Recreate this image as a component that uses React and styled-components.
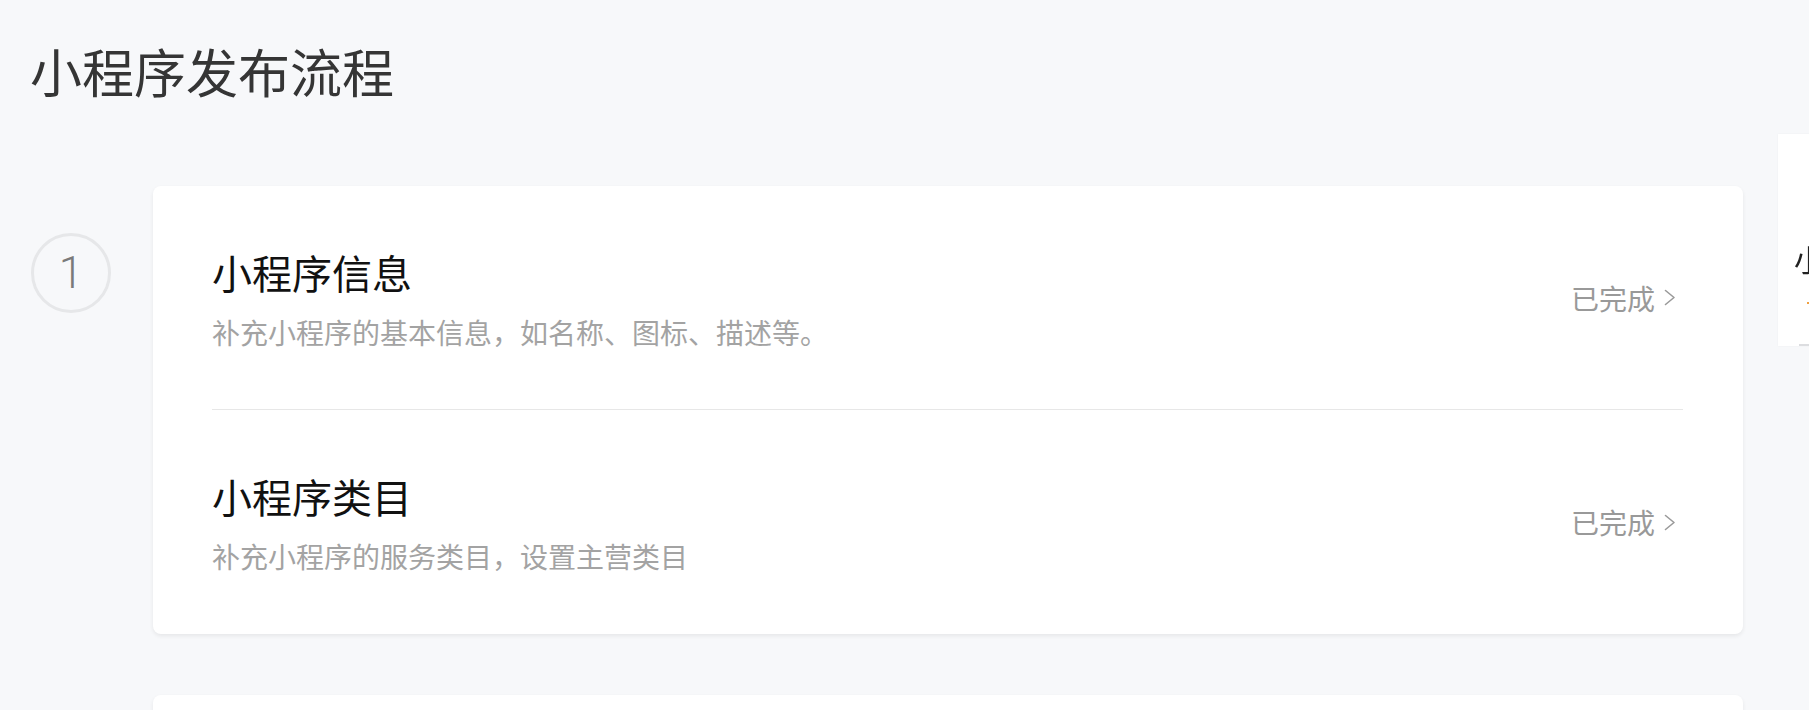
import React from 'react';
import styled, { createGlobalStyle } from 'styled-components';

const GlobalStyle = createGlobalStyle`
  html, body {
    margin: 0;
    padding: 0;
    background: #f7f8fa;
    overflow: hidden;
  }
  body {
    font-family: "Noto Sans CJK SC", "Noto Sans", sans-serif;
  }
`;

const steps = [
  {
    num: 1,
    items: [
      { title: '小程序信息', desc: '补充小程序的基本信息，如名称、图标、描述等。', status: '已完成' },
      { title: '小程序类目', desc: '补充小程序的服务类目，设置主营类目', status: '已完成' },
    ],
  },
  {
    num: 2,
    items: [],
  },
];

function Chevron() {
  return (
    <svg width="12" height="17" viewBox="0 0 12 17" fill="none">
      <path d="M1.5 1.5 L10 8.5 L1.5 15.5" stroke="#9a9a9a" strokeWidth="1.6" strokeLinecap="round" strokeLinejoin="round" />
    </svg>
  );
}

function App() {
  return (
    <>
      <GlobalStyle />
      <Page>
        <PageTitle>小程序发布流程</PageTitle>
        <Steps>
          {steps.map((step) => (
            <Step key={step.num}>
              <Marker>{step.items.length > 0 ? step.num : ''}</Marker>
              <Card>
                {step.items.map((item) => (
                  <Item key={item.title}>
                    <ItemText>
                      <ItemTitle>{item.title}</ItemTitle>
                      <ItemDesc>{item.desc}</ItemDesc>
                    </ItemText>
                    <Status>
                      {item.status}
                      <Chevron />
                    </Status>
                  </Item>
                ))}
                {step.items.length === 0 && <Item />}
              </Card>
            </Step>
          ))}
        </Steps>
      </Page>
      <SidePanel>
        <SideTitle>小</SideTitle>
        <SideDot />
        <SideBar />
      </SidePanel>
    </>
  );
}

export default App;

const Page = styled.div`
  padding: 35px 66px 0 30px;
  height: 710px;
  box-sizing: border-box;
`;

const PageTitle = styled.h1`
  margin: 0 0 79px 0;
  font-size: 52px;
  line-height: 72px;
  font-weight: 400;
  color: #353535;
`;

const Steps = styled.div`
  display: flex;
  flex-direction: column;
  gap: 61px;
`;

const Step = styled.div`
  display: flex;
  align-items: flex-start;
  gap: 42px;
  padding-left: 1px;
`;

const Marker = styled.div`
  flex: none;
  width: 80px;
  height: 80px;
  margin-top: 47px;
  box-sizing: border-box;
  border: 3px solid #e6e7e9;
  border-radius: 50%;
  display: flex;
  align-items: center;
  justify-content: center;
  font-family: Roboto, "Liberation Sans", sans-serif;
  font-weight: 300;
  font-size: 44px;
  color: #7a7a7a;
`;

const Card = styled.div`
  flex: 1;
  background: #ffffff;
  border-radius: 8px;
  box-shadow: 0 2px 4px rgba(0, 0, 0, 0.07);
  padding: 0 60px 0 59px;
`;

const Item = styled.div`
  display: flex;
  align-items: center;
  justify-content: space-between;
  height: 223px;
  & + & {
    border-top: 1px solid #e7e7e7;
    height: 224px;
  }
`;

const ItemText = styled.div`
  display: flex;
  flex-direction: column;
  gap: 12px;
`;

const ItemTitle = styled.div`
  font-size: 40px;
  line-height: 56px;
  color: #111111;
`;

const ItemDesc = styled.div`
  font-size: 28px;
  line-height: 40px;
  color: #a3a3a3;
`;

const Status = styled.div`
  display: flex;
  align-items: center;
  gap: 9px;
  margin-right: 7px;
  font-size: 28px;
  color: #999999;
`;

const SidePanel = styled.div`
  position: fixed;
  left: 1778px;
  top: 134px;
  width: 200px;
  height: 212px;
  background: #ffffff;
  box-shadow: 0 0 2px rgba(0, 0, 0, 0.04);
`;

const SideTitle = styled.div`
  position: absolute;
  left: 16px;
  top: 104px;
  font-size: 30px;
  line-height: 40px;
  color: #222222;
`;

const SideDot = styled.div`
  position: absolute;
  left: 29px;
  top: 168px;
  width: 4px;
  height: 2px;
  background: #f0a040;
`;

const SideBar = styled.div`
  position: absolute;
  left: 21px;
  bottom: 0;
  width: 100px;
  height: 2px;
  background: #dcdde0;
`;
